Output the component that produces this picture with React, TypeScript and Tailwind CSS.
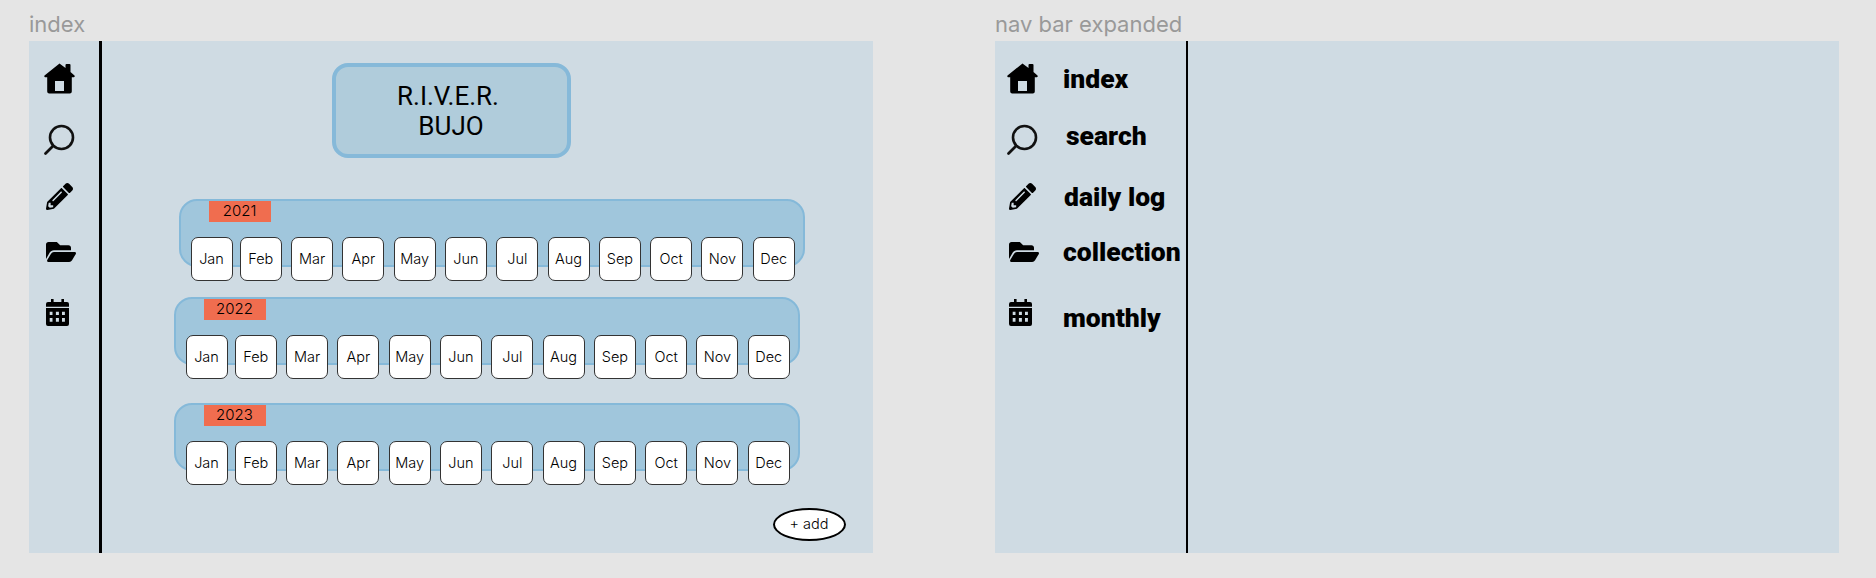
import { FaFolderOpen, FaPencilAlt } from 'react-icons/fa';

const MONTHS = ['Jan', 'Feb', 'Mar', 'Apr', 'May', 'Jun', 'Jul', 'Aug', 'Sep', 'Oct', 'Nov', 'Dec'];

function HomeIcon() {
  return (
    <svg width="31" height="31" viewBox="0 0 31 31" className="block">
      <path
        fill="#000"
        fillRule="evenodd"
        d="M15.5 0.5 L21.5 5 V2 Q21.5 1 22.5 1 H25.5 Q26.5 1 26.5 2 V9 L30.5 12.5 Q31.2 13.6 30 14.2 H27.8 V28.5 Q27.8 30.5 25.8 30.5 H5.2 Q3.2 30.5 3.2 28.5 V14.2 H1 Q-0.2 13.6 0.5 12.5 Z M11 18 V28 H20 V18 Z"
      />
    </svg>
  );
}

function SearchIcon() {
  return (
    <svg width="32" height="32" viewBox="0 0 32 32" fill="none" stroke="#111" className="block">
      <circle cx="18.5" cy="13.5" r="11.5" strokeWidth="2.6" />
      <path d="M10 22 L2.5 29.5" strokeWidth="2.8" strokeLinecap="round" />
    </svg>
  );
}

function CalendarIcon() {
  return (
    <svg width="23" height="27" viewBox="0 0 23 27" className="block">
      <rect x="5" y="0" width="2.6" height="5" fill="#000" />
      <rect x="15.4" y="0" width="2.6" height="5" fill="#000" />
      <path
        fill="#000"
        fillRule="evenodd"
        d="M2 3 H21 Q23 3 23 5 V25 Q23 27 21 27 H2 Q0 27 0 25 V5 Q0 3 2 3 Z M0 7.8 V9 H23 V7.8 Z M3.7 12.7 V16 H6.5 V12.7 Z M9.9 12.7 V16 H12.9 V12.7 Z M16 12.7 V16 H18.9 V12.7 Z M3.7 19 V22.7 H6.5 V19 Z M9.9 19 V22.7 H12.9 V19 Z M16 19 V22.7 H18.9 V19 Z"
      />
    </svg>
  );
}

function NavRail({ expanded }: { expanded?: boolean }) {
  const labelClass = 'text-[26.5px] leading-none font-black text-black font-["Roboto",sans-serif] whitespace-nowrap';
  // icons sit a little further left in the expanded frame
  const nudge = expanded ? '-ml-[3.5px]' : '';
  return (
    <div className="flex flex-col pt-[22px]">
      {/* Home */}
      <div className="flex h-[31px] items-center">
        <div className="w-[69px] shrink-0 pl-[15px]"><div className={nudge}><HomeIcon /></div></div>
        {expanded && <span className={`${labelClass} -ml-[1px] mt-[2px]`}>index</span>}
      </div>
      {/* Search */}
      <div className="mt-[30px] flex h-[32px] items-center">
        <div className="w-[69px] shrink-0 pl-[14px]"><div className={nudge}><SearchIcon /></div></div>
        {expanded && <span className={`${labelClass} ml-[2px] -mt-[8px]`}>search</span>}
      </div>
      {/* Pencil */}
      <div className="mt-[27px] flex h-[27px] items-center">
        <div className="w-[69px] shrink-0 pl-[17px]"><div className={nudge}><FaPencilAlt className="text-black" size={27} /></div></div>
        {expanded && <span className={`${labelClass} mt-[2px]`}>daily log</span>}
      </div>
      {/* Folder */}
      <div className="mt-[28px] flex h-[28px] items-center">
        <div className="w-[69px] shrink-0 pl-[17px]"><div className={nudge}><FaFolderOpen className="text-black" size={30} /></div></div>
        {expanded && <span className={`${labelClass} -ml-[1px]`}>collection</span>}
      </div>
      {/* Calendar */}
      <div className="mt-[33px] flex h-[27px] items-center">
        <div className="w-[69px] shrink-0 pl-[17px]"><div className={nudge}><CalendarIcon /></div></div>
        {expanded && <span className={`${labelClass} -ml-[1px] mt-[11px]`}>monthly</span>}
      </div>
    </div>
  );
}

function YearBand({ year, offset, top }: { year: string; offset: string; top: string }) {
  return (
    <div className={`${offset} ${top} w-[626px] rounded-[18px] border-2 border-[#85b9d9] bg-[#a0c6dc]`}>
      <div className="ml-[28px] h-[21px] w-[62px] bg-[#f06d4f] text-center text-[15px] font-light leading-[19px] text-black">
        {year}
      </div>
      <div className="mt-[15px] -mb-[16px] flex gap-[9.3px] pl-[10px]">
        {MONTHS.map((m) => (
          <div
            key={m}
            className="flex h-[44px] w-[42px] shrink-0 items-center justify-center rounded-[7px] border border-[#333] bg-white text-[14.5px] font-light text-black first:mr-[-2px]"
          >
            {m}
          </div>
        ))}
      </div>
    </div>
  );
}

export default function App() {
  return (
    <div className='flex h-[578px] w-[1876px] gap-[122px] overflow-hidden bg-[#e5e5e5] pl-[29px] font-["Inter",sans-serif]'>
      {/* index frame */}
      <div className="w-[844px] shrink-0">
        <div className="h-[41px] pt-[11px] text-[22px] leading-[26px] text-[#999]">index</div>
        <div className="flex h-[512px] bg-[#cfdbe3]">
          <div className="w-[70px] shrink-0">
            <NavRail />
          </div>
          <div className="w-[2.5px] shrink-0 bg-black" />
          <div className="flex min-w-0 flex-1 flex-col">
            <div className='ml-[230px] mt-[22px] flex h-[95px] w-[239px] flex-col items-center justify-center rounded-[16px] border-[4px] border-[#86b9d9] bg-[#b0ccdb] pr-[6px] text-[26px] leading-[30px] text-black font-["Roboto",sans-serif]'>
              <span>R.I.V.E.R.</span>
              <span className="ml-[6px]">BUJO</span>
            </div>
            <YearBand year="2021" offset="ml-[77px]" top="mt-[41px]" />
            <YearBand year="2022" offset="ml-[72px]" top="mt-[30px]" />
            <YearBand year="2023" offset="ml-[72px]" top="mt-[38px]" />
            <div className="ml-[671px] mt-[37px] flex h-[33px] w-[73px] items-center justify-center rounded-[50%] border-[2.5px] border-black bg-white pb-[1px] text-[14.5px] font-light text-black">
              + add
            </div>
          </div>
        </div>
      </div>

      {/* nav bar expanded frame */}
      <div className="w-[844px] shrink-0">
        <div className="h-[41px] pt-[11px] text-[22px] leading-[26px] text-[#999]">nav bar expanded</div>
        <div className="flex h-[512px] bg-[#cfdbe3]">
          <div className="w-[190.5px] shrink-0">
            <NavRail expanded />
          </div>
          <div className="w-[2.5px] shrink-0 bg-black" />
          <div className="flex-1" />
        </div>
      </div>
    </div>
  );
}
